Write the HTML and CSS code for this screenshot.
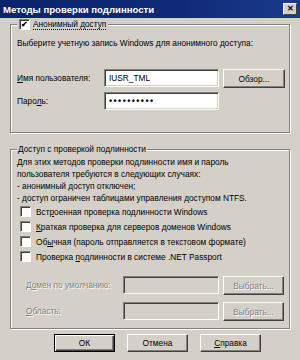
FILE: index.html
```html
<!DOCTYPE html>
<html lang="ru">
<head>
<meta charset="utf-8">
<link rel="stylesheet" href="styles.css">
</head>
<body>
<div class="window">
  <div class="titlebar">
    <span class="title">Методы проверки подлинности</span>
    <span class="close">✕</span>
  </div>
  <div class="content">
    <fieldset class="group group-anon">
      <legend class="legend"><span class="check checked">✔</span><span class="focus">Анонимный доступ</span></legend>
      <p class="hint">Выберите учетную запись Windows для анонимного доступа:</p>
      <div class="row row-user">
        <label class="lbl lbl-user"><u>И</u>мя пользователя:</label>
        <span class="input">IUSR_TML</span>
        <span class="btn btn-browse">Обзор...</span>
      </div>
      <div class="row row-pass">
        <label class="lbl lbl-user">Паро<u>л</u>ь:</label>
        <span class="input dots">••••••••••</span>
      </div>
    </fieldset>

    <fieldset class="group group-auth">
      <legend class="legend legend-text">Доступ с проверкой подлинности</legend>
      <p class="para">Для этих методов проверки подлинности имя и пароль<br>пользователя требуются в следующих случаях:<br>- анонимный доступ отключен;<br>- доступ ограничен таблицами управления доступом NTFS.</p>
      <div class="checks">
        <div class="chk-row"><span class="check"></span><span>Вст<u>р</u>оенная проверка подлинности Windows</span></div>
        <div class="chk-row"><span class="check"></span><span><u>К</u>раткая проверка для серверов доменов Windows</span></div>
        <div class="chk-row"><span class="check"></span><span>Об<u>ы</u>чная (пароль отправляется в текстовом формате)</span></div>
        <div class="chk-row"><span class="check"></span><span>Проверка <u>п</u>одлинности в системе .NET Passport</span></div>
      </div>
      <div class="row row-domain">
        <label class="lbl lbl-dom disabled">Д<u>о</u>мен по умолчанию:</label>
        <span class="input input-dis"></span>
        <span class="btn btn-dis">Выбрать...</span>
      </div>
      <div class="row row-realm">
        <label class="lbl lbl-dom disabled"><u>О</u>бласть:</label>
        <span class="input input-dis"></span>
        <span class="btn btn-dis">Выбрать...</span>
      </div>
    </fieldset>

    <div class="buttons">
      <span class="btn btn-main default">ОК</span>
      <span class="btn btn-main">Отмена</span>
      <span class="btn btn-main"><u>С</u>правка</span>
    </div>
  </div>
</div>
</body>
</html>
```

FILE: styles.css
```css
html, body {
  margin: 0;
  padding: 0;
}
body {
  width: 300px;
  height: 360px;
  overflow: hidden;
  background: #d4d0c8;
  font-family: "Liberation Sans", Arial, sans-serif;
  font-size: 8.3px;
  color: #000;
}
.window {
  width: 300px;
  height: 360px;
  box-sizing: border-box;
}
.titlebar {
  height: 18px;
  background: linear-gradient(90deg, #0a246a 0%, #0f2b78 60%, #1a3a8c 100%);
  display: flex;
  align-items: center;
  justify-content: space-between;
  padding: 0 3px 0 3px;
}
.title {
  color: #fff;
  font-weight: bold;
  font-size: 9.6px;
  white-space: nowrap;
}
.close {
  width: 12px;
  height: 10px;
  background: #d4d0c8;
  border: 1px solid;
  border-color: #fff #404040 #404040 #fff;
  font-size: 8px;
  font-weight: bold;
  line-height: 10px;
  text-align: center;
  color: #000;
}
.content {
  padding: 0 10px 0 10px;
}
.group {
  margin: 0;
  padding: 0 6px 0 6px;
  border: 1px solid #808080;
  box-shadow: 1px 1px 0 #fff, inset 1px 1px 0 #fff;
  min-width: 0;
}
.legend {
  padding: 0 2px;
  background: #d4d0c8;
  display: flex;
  align-items: center;
  height: 13px;
  line-height: 13px;
  white-space: nowrap;
}
.legend-text {
  padding: 0 1px;
  display: block;
}
.check {
  display: inline-block;
  width: 9px;
  height: 9px;
  background: #fff;
  border: 1px solid;
  border-color: #808080 #fff #fff #808080;
  box-shadow: inset 1px 1px 0 #404040;
  font-size: 8px;
  line-height: 10px;
  text-align: center;
  font-weight: bold;
  flex: none;
}
.legend .check {
  margin-right: 3px;
}
.focus {
  border-bottom: 1px dotted #000;
  line-height: 10px;
}
.hint {
  margin: 6px 0 0 0;
  line-height: 13px;
  white-space: nowrap;
}
.row {
  display: flex;
  align-items: flex-start;
}
.row-user {
  margin-top: 19px;
}
.row-pass {
  margin-top: 4px;
  margin-bottom: 22px;
}
.lbl {
  line-height: 18px;
  height: 18px;
  white-space: nowrap;
}
.lbl-user {
  width: 87px;
  flex: none;
}
.input {
  box-sizing: border-box;
  width: 115px;
  height: 18px;
  background: #fff;
  border: 1px solid;
  border-color: #808080 #fff #fff #808080;
  box-shadow: inset 1px 1px 0 #404040, inset -1px -1px 0 #d4d0c8;
  padding: 0 4px;
  line-height: 16px;
  flex: none;
}
.dots {
  font-size: 9px;
  font-weight: bold;
  letter-spacing: 1.4px;
}
.btn {
  box-sizing: border-box;
  height: 19px;
  border: 1px solid;
  border-color: #fff #404040 #404040 #fff;
  box-shadow: inset -1px -1px 0 #808080;
  display: flex;
  align-items: center;
  justify-content: center;
  background: #d4d0c8;
  flex: none;
  white-space: nowrap;
}
.btn-browse {
  width: 62px;
  margin-left: 4px;
}
.group-auth {
  margin-top: 10px;
}
.para {
  margin: 0;
  line-height: 12px;
  white-space: nowrap;
}
.checks {
  margin-top: 0;
  display: flex;
  flex-direction: column;
}
.chk-row {
  display: flex;
  align-items: center;
  height: 15px;
  white-space: nowrap;
}
.chk-row .check {
  margin-left: 3px;
  margin-right: 5px;
}
.row-domain {
  margin-top: 12px;
}
.row-realm {
  margin-top: 7px;
  margin-bottom: 7px;
}
.lbl-dom {
  width: 97px;
  margin-left: 9px;
  flex: none;
}
.input-dis {
  width: 96px;
  background: #d4d0c8;
}
.disabled {
  color: #808080;
  text-shadow: 1px 1px 0 #fff;
}
.btn-dis {
  width: 61px;
  margin-left: 4px;
  color: #808080;
  text-shadow: 1px 1px 0 #fff;
}
.buttons {
  display: flex;
  gap: 12px;
  margin-top: 5px;
  padding-left: 44px;
}
.btn-main {
  width: 61px;
  height: 18px;
}
.default {
  border: 1px solid #000;
  box-shadow: inset 1px 1px 0 #fff, inset -1px -1px 0 #404040, inset -2px -2px 0 #808080;
}
```
